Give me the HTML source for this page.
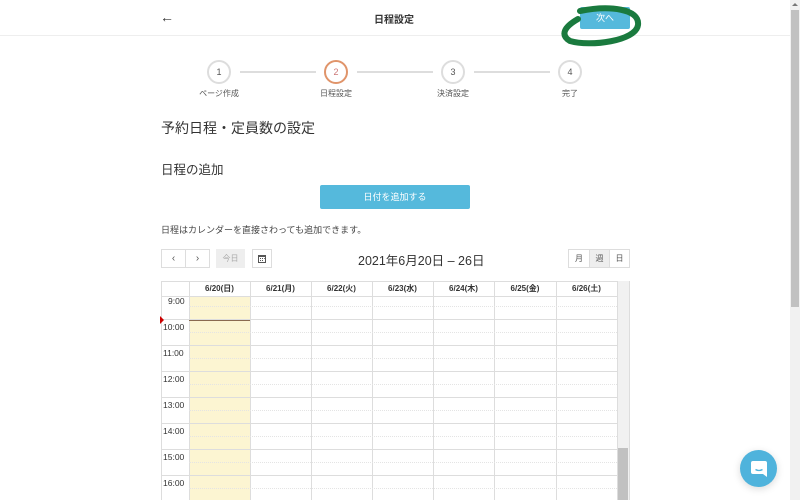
<!DOCTYPE html>
<html><head><meta charset="utf-8"><style>
*{box-sizing:border-box;margin:0;padding:0}
body{width:800px;height:500px;overflow:hidden;background:#fff;font-family:"Liberation Sans","Noto Sans CJK JP",sans-serif;color:#333;position:relative}
.a{position:absolute}
.sb{right:0;top:0;width:10px;height:500px;background:#f1f1f1}
.hdr{left:0;top:0;width:790px;height:36px;border-bottom:1px solid #eee}
.circ{width:24px;height:24px;border:2px solid #ddd;border-radius:50%;font-size:9px;text-align:center;line-height:20px;color:#555;background:#fff}
.line{height:2px;background:#ddd;top:71px}
.lbl{font-size:8px;color:#555;top:88px;width:80px;text-align:center}
.btn{border:1px solid #ddd;background:#fff;height:19px;font-size:10px;text-align:center;line-height:17px;color:#555}
.col{top:281px;height:219px;border-left:1px solid #ddd}
.hd{top:281px;height:16px;font-size:8px;font-weight:bold;text-align:center;line-height:16px;color:#333}
.hr{left:161px;width:456px;height:1px;background:#ddd}
.hh{left:189px;width:428px;height:0;border-top:1px dotted #e4e4e4}
.tm{left:163px;font-size:8.5px;color:#333}
</style></head><body>
<div class="a sb"></div><div class="a" style="right:1px;top:10px;width:8px;height:297px;background:#c1c1c1"></div>
<div class="a" style="right:2px;top:3px;width:0;height:0;border-left:3px solid transparent;border-right:3px solid transparent;border-bottom:3px solid #777"></div>
<div class="a hdr"></div>
<div class="a" style="left:160px;top:9px;font-size:14px">←</div>
<div class="a" style="left:374px;top:11px;font-size:10px;font-weight:bold">日程設定</div>
<div class="a" style="left:580px;top:7px;width:50px;height:22px;background:#55b9dc;border-radius:2px;color:#fff;font-size:9px;text-align:center;line-height:22px">次へ</div>
<svg class="a" style="left:560px;top:5px" width="85" height="45"><path d="M20 6 C50 0 80 4 78 20 C76 36 30 42 10 36 C0 30 4 22 18 14" fill="none" stroke="#1a7a3e" stroke-width="6" stroke-linecap="round"/></svg>
<div class="a line" style="left:240px;width:76px"></div>
<div class="a line" style="left:357px;width:76px"></div>
<div class="a line" style="left:474px;width:76px"></div>
<div class="a circ" style="left:207px;top:60px">1</div>
<div class="a circ" style="left:324px;top:60px;border-color:#e0946a;color:#c77">2</div>
<div class="a circ" style="left:441px;top:60px">3</div>
<div class="a circ" style="left:558px;top:60px">4</div>
<div class="a lbl" style="left:179px">ページ作成</div>
<div class="a lbl" style="left:296px">日程設定</div>
<div class="a lbl" style="left:413px">決済設定</div>
<div class="a lbl" style="left:530px">完了</div>
<div class="a" style="left:161px;top:118px;font-size:14px">予約日程・定員数の設定</div>
<div class="a" style="left:161px;top:159px;font-size:12.5px">日程の追加</div>
<div class="a" style="left:320px;top:185px;width:150px;height:24px;background:#55b9dc;border-radius:2px;color:#fff;font-size:9px;text-align:center;line-height:24px">日付を追加する</div>
<div class="a" style="left:161px;top:223px;font-size:9px;color:#444">日程はカレンダーを直接さわっても追加できます。</div>
<div class="a btn" style="left:161px;top:249px;width:25px">‹</div>
<div class="a btn" style="left:185px;top:249px;width:25px">›</div>
<div class="a btn" style="left:216px;top:249px;width:29px;background:#eee;color:#aaa;border-color:#eee;font-size:8px">今日</div>
<div class="a btn" style="left:252px;top:249px;width:20px"></div>
<svg class="a" style="left:258px;top:254px" width="8" height="9"><rect x="0.5" y="1.5" width="7" height="7" fill="none" stroke="#555"/><rect x="0" y="1" width="8" height="2" fill="#555"/><path d="M2 4.5h1M4 4.5h1M6 4.5h0.8M2 6.5h1M4 6.5h1" stroke="#555"/></svg>
<div class="a" style="left:358px;top:250px;font-size:12.5px">2021年6月20日 – 26日</div>
<div class="a btn" style="left:568px;top:249px;width:22px;font-size:8px">月</div>
<div class="a btn" style="left:589px;top:249px;width:21px;font-size:8px;background:#eee">週</div>
<div class="a btn" style="left:609px;top:249px;width:21px;font-size:8px">日</div>
<div class="a" style="left:161px;top:281px;width:469px;height:219px;border:1px solid #ddd;border-bottom:none"></div>
<div class="a" style="left:189px;top:297px;width:61px;height:203px;background:#fcf5d2"></div>
<div class="a" style="left:617px;top:281px;width:12px;height:219px;background:#f1f1f1"></div>
<div class="a" style="left:618px;top:448px;width:10px;height:52px;background:#c1c1c1"></div>
<div class="a col" style="left:189px"></div><div class="a col" style="left:250px"></div><div class="a col" style="left:311px"></div><div class="a col" style="left:372px"></div><div class="a col" style="left:433px"></div><div class="a col" style="left:494px"></div><div class="a col" style="left:556px"></div><div class="a col" style="left:617px"></div>
<div class="a hd" style="left:189px;width:61px">6/20(日)</div><div class="a hd" style="left:250px;width:61px">6/21(月)</div><div class="a hd" style="left:311px;width:61px">6/22(火)</div><div class="a hd" style="left:372px;width:61px">6/23(水)</div><div class="a hd" style="left:433px;width:61px">6/24(木)</div><div class="a hd" style="left:494px;width:62px">6/25(金)</div><div class="a hd" style="left:556px;width:61px">6/26(土)</div>
<div class="a hr" style="top:296px"></div>
<div class="a hh" style="top:306px"></div><div class="a hr" style="top:319px"></div>
<div class="a hh" style="top:332px"></div><div class="a hr" style="top:345px"></div>
<div class="a hh" style="top:358px"></div><div class="a hr" style="top:371px"></div>
<div class="a hh" style="top:384px"></div><div class="a hr" style="top:397px"></div>
<div class="a hh" style="top:410px"></div><div class="a hr" style="top:423px"></div>
<div class="a hh" style="top:436px"></div><div class="a hr" style="top:449px"></div>
<div class="a hh" style="top:462px"></div><div class="a hr" style="top:475px"></div>
<div class="a hh" style="top:488px"></div>
<div class="a" style="left:189px;top:320px;width:61px;height:1px;background:#8a6a50"></div>
<div class="a" style="left:160px;top:316px;width:0;height:0;border-top:4px solid transparent;border-bottom:4px solid transparent;border-left:4px solid #c00"></div>
<div class="a tm" style="top:296px;left:168px">9:00</div>
<div class="a tm" style="top:322px">10:00</div><div class="a tm" style="top:348px">11:00</div><div class="a tm" style="top:374px">12:00</div><div class="a tm" style="top:400px">13:00</div><div class="a tm" style="top:426px">14:00</div><div class="a tm" style="top:452px">15:00</div><div class="a tm" style="top:478px">16:00</div>
<div class="a" style="left:740px;top:450px;width:37px;height:37px;border-radius:50%;background:#4fb3dc;box-shadow:0 2px 8px rgba(0,0,0,.15)"></div>
<svg class="a" style="left:748px;top:458px" width="22" height="22"><path d="M5 3h12a2 2 0 0 1 2 2v14l-4-3H5a2 2 0 0 1-2-2V5a2 2 0 0 1 2-2z" fill="#fff"/><path d="M7.5 11.5q3.5 2 7 0" stroke="#4fb3dc" stroke-width="1.3" fill="none"/></svg>
</body></html>
